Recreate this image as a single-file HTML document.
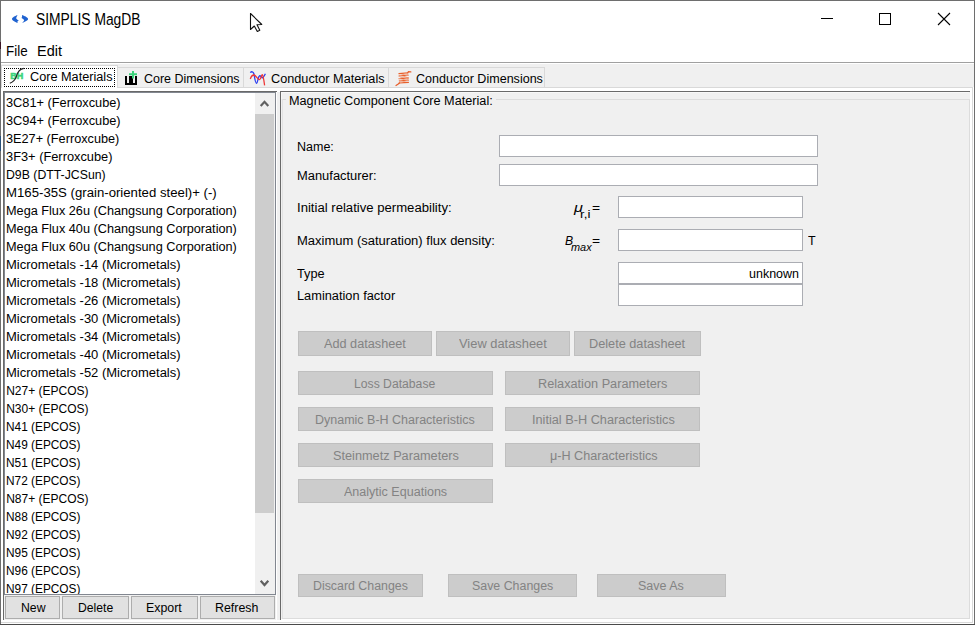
<!DOCTYPE html>
<html><head><meta charset="utf-8"><style>
html,body{margin:0;padding:0;width:975px;height:625px;overflow:hidden;background:#f0f0f0;}
body>div,body>svg,div>div{position:absolute;}
.t{font-family:"Liberation Sans",sans-serif;}
</style></head><body>
<div style="left:0px;top:0px;width:975px;height:62px;background:#fff;"></div>
<div style="left:0px;top:62px;width:975px;height:1px;background:#a0a0a0;"></div>
<div style="left:1px;top:63px;width:973px;height:1px;background:#fff;"></div>
<div style="left:1px;top:64px;width:973px;height:23px;background:#f0f0f0;"></div>
<div style="left:1px;top:87px;width:973px;height:537px;background:#fff;"></div>
<div style="left:117px;top:87px;width:856px;height:1px;background:#d9d9d9;"></div>
<div style="left:972px;top:87px;width:1px;height:536px;background:#d9d9d9;"></div>
<div style="left:1px;top:622px;width:972px;height:1px;background:#d9d9d9;"></div>
<div style="left:1px;top:65px;width:117px;height:23px;background:#fff;"></div>
<div style="left:1px;top:65px;width:117px;height:1px;background:#d9d9d9;"></div>
<div style="left:1px;top:65px;width:1px;height:23px;background:#d9d9d9;"></div>
<div style="left:117px;top:65px;width:1px;height:23px;background:#d9d9d9;"></div>
<div style="left:118px;top:68px;width:125px;height:19px;background:#f0f0f0;"></div>
<div style="left:117px;top:67px;width:127px;height:1px;background:#d9d9d9;"></div>
<div style="left:117px;top:67px;width:1px;height:21px;background:#d9d9d9;"></div>
<div style="left:243px;top:67px;width:1px;height:21px;background:#d9d9d9;"></div>
<div style="left:244px;top:68px;width:144px;height:19px;background:#f0f0f0;"></div>
<div style="left:243px;top:67px;width:146px;height:1px;background:#d9d9d9;"></div>
<div style="left:243px;top:67px;width:1px;height:21px;background:#d9d9d9;"></div>
<div style="left:388px;top:67px;width:1px;height:21px;background:#d9d9d9;"></div>
<div style="left:389px;top:68px;width:155px;height:19px;background:#f0f0f0;"></div>
<div style="left:388px;top:67px;width:157px;height:1px;background:#d9d9d9;"></div>
<div style="left:388px;top:67px;width:1px;height:21px;background:#d9d9d9;"></div>
<div style="left:544px;top:67px;width:1px;height:21px;background:#d9d9d9;"></div>
<div style="left:117px;top:65px;width:1px;height:23px;background:#d9d9d9;"></div>
<div style="left:4px;top:68px;width:111px;height:19px;background:repeating-linear-gradient(90deg,#000 0 1px,transparent 1px 2px) 0 0/100% 1px no-repeat,repeating-linear-gradient(90deg,#000 0 1px,transparent 1px 2px) 0 18px/100% 1px no-repeat,repeating-linear-gradient(180deg,#000 0 1px,transparent 1px 2px) 0 0/1px 100% no-repeat,repeating-linear-gradient(180deg,#000 0 1px,transparent 1px 2px) 110px 0/1px 100% no-repeat;"></div>
<div style="left:4px;top:92px;width:272px;height:528px;background:#f0f0f0;"></div>
<div style="left:3px;top:91px;width:274px;height:1px;background:#696969;"></div>
<div style="left:3px;top:91px;width:1px;height:529px;background:#696969;"></div>
<div style="left:4px;top:92px;width:272px;height:503px;background:#fff;box-shadow:inset 0 0 0 1px #828790;"></div>
<div style="left:255px;top:93px;width:20px;height:501px;background:#f0f0f0;"></div>
<div style="left:255px;top:114px;width:19px;height:399px;background:#cdcdcd;"></div>
<div style="left:5px;top:596px;width:55px;height:23px;background:#e1e1e1;box-shadow:inset 0 0 0 1px #adadad;"></div>
<div style="left:62px;top:596px;width:67px;height:23px;background:#e1e1e1;box-shadow:inset 0 0 0 1px #adadad;"></div>
<div style="left:131px;top:596px;width:67px;height:23px;background:#e1e1e1;box-shadow:inset 0 0 0 1px #adadad;"></div>
<div style="left:200px;top:596px;width:75px;height:23px;background:#e1e1e1;box-shadow:inset 0 0 0 1px #adadad;"></div>
<div style="left:277px;top:92px;width:3px;height:528px;background:#f0f0f0;"></div>
<div style="left:281px;top:92px;width:689px;height:527px;background:#f0f0f0;"></div>
<div style="left:280px;top:91px;width:690px;height:1px;background:#696969;"></div>
<div style="left:280px;top:91px;width:1px;height:529px;background:#696969;"></div>
<div style="left:281px;top:92px;width:688px;height:1px;background:#f8f8f8;"></div>
<div style="left:281px;top:92px;width:1px;height:7px;background:#f8f8f8;"></div>
<div style="left:282px;top:99px;width:688px;height:1px;background:#dcdcdc;"></div>
<div style="left:282px;top:99px;width:1px;height:520px;background:#e2e2e2;"></div>
<div style="left:969px;top:99px;width:1px;height:520px;background:#dcdcdc;"></div>
<div style="left:282px;top:618px;width:688px;height:1px;background:#dcdcdc;"></div>
<div style="left:286px;top:93px;width:210px;height:12px;background:#f0f0f0;"></div>
<div style="left:499px;top:135px;width:319px;height:22px;background:#fff;box-shadow:inset 0 0 0 1px #abadb3;"></div>
<div style="left:499px;top:164px;width:319px;height:22px;background:#fff;box-shadow:inset 0 0 0 1px #abadb3;"></div>
<div style="left:618px;top:196px;width:185px;height:22px;background:#fff;box-shadow:inset 0 0 0 1px #abadb3;"></div>
<div style="left:618px;top:229px;width:185px;height:22px;background:#fff;box-shadow:inset 0 0 0 1px #abadb3;"></div>
<div style="left:618px;top:262px;width:185px;height:22px;background:#fff;box-shadow:inset 0 0 0 1px #abadb3;"></div>
<div style="left:618px;top:284px;width:185px;height:22px;background:#fff;box-shadow:inset 0 0 0 1px #abadb3;"></div>
<div style="left:298px;top:331px;width:134px;height:25px;background:#cccccc;box-shadow:inset 0 0 0 1px #bfbfbf;"></div>
<div style="left:436px;top:331px;width:134px;height:25px;background:#cccccc;box-shadow:inset 0 0 0 1px #bfbfbf;"></div>
<div style="left:574px;top:331px;width:127px;height:25px;background:#cccccc;box-shadow:inset 0 0 0 1px #bfbfbf;"></div>
<div style="left:298px;top:371px;width:195px;height:24px;background:#cccccc;box-shadow:inset 0 0 0 1px #bfbfbf;"></div>
<div style="left:505px;top:371px;width:195px;height:24px;background:#cccccc;box-shadow:inset 0 0 0 1px #bfbfbf;"></div>
<div style="left:298px;top:407px;width:195px;height:24px;background:#cccccc;box-shadow:inset 0 0 0 1px #bfbfbf;"></div>
<div style="left:505px;top:407px;width:195px;height:24px;background:#cccccc;box-shadow:inset 0 0 0 1px #bfbfbf;"></div>
<div style="left:298px;top:443px;width:195px;height:24px;background:#cccccc;box-shadow:inset 0 0 0 1px #bfbfbf;"></div>
<div style="left:505px;top:443px;width:195px;height:24px;background:#cccccc;box-shadow:inset 0 0 0 1px #bfbfbf;"></div>
<div style="left:298px;top:479px;width:195px;height:24px;background:#cccccc;box-shadow:inset 0 0 0 1px #bfbfbf;"></div>
<div style="left:298px;top:574px;width:125px;height:23px;background:#cccccc;box-shadow:inset 0 0 0 1px #bfbfbf;"></div>
<div style="left:448px;top:574px;width:129px;height:23px;background:#cccccc;box-shadow:inset 0 0 0 1px #bfbfbf;"></div>
<div style="left:597px;top:574px;width:129px;height:23px;background:#cccccc;box-shadow:inset 0 0 0 1px #bfbfbf;"></div>
<div class="t" style="left:35.60px;top:11px;font-size:15.65px;line-height:17px;color:#000;white-space:pre;transform:scaleX(0.8842);transform-origin:0 0;">SIMPLIS MagDB</div>
<div class="t" style="left:5.70px;top:42px;font-size:15px;line-height:17px;color:#000;white-space:pre;transform:scaleX(0.8926);transform-origin:0 0;">File</div>
<div class="t" style="left:37.00px;top:42px;font-size:15px;line-height:17px;color:#000;white-space:pre;transform:scaleX(0.9651);transform-origin:0 0;">Edit</div>
<div class="t" style="left:29.70px;top:70px;font-size:12px;line-height:14px;color:#000;white-space:pre;transform:scaleX(1.0577);transform-origin:0 0;">Core Materials</div>
<div class="t" style="left:143.70px;top:72px;font-size:12px;line-height:14px;color:#000;white-space:pre;transform:scaleX(1.0380);transform-origin:0 0;">Core Dimensions</div>
<div class="t" style="left:270.80px;top:72px;font-size:12px;line-height:14px;color:#000;white-space:pre;transform:scaleX(1.0577);transform-origin:0 0;">Conductor Materials</div>
<div class="t" style="left:415.50px;top:72px;font-size:12px;line-height:14px;color:#000;white-space:pre;transform:scaleX(1.0453);transform-origin:0 0;">Conductor Dimensions</div>
<div style="left:5px;top:93px;width:250px;height:501px;overflow:hidden;">
<div class="t" style="left:1.20px;top:3px;font-size:12px;line-height:14px;color:#000;white-space:pre;transform:scaleX(1.0641);transform-origin:0 0;">3C81+ (Ferroxcube)</div><div class="t" style="left:1.20px;top:21px;font-size:12px;line-height:14px;color:#000;white-space:pre;transform:scaleX(1.0641);transform-origin:0 0;">3C94+ (Ferroxcube)</div><div class="t" style="left:1.20px;top:39px;font-size:12px;line-height:14px;color:#000;white-space:pre;transform:scaleX(1.0588);transform-origin:0 0;">3E27+ (Ferroxcube)</div><div class="t" style="left:1.20px;top:57px;font-size:12px;line-height:14px;color:#000;white-space:pre;transform:scaleX(1.0682);transform-origin:0 0;">3F3+ (Ferroxcube)</div><div class="t" style="left:1.20px;top:75px;font-size:12px;line-height:14px;color:#000;white-space:pre;transform:scaleX(1.0236);transform-origin:0 0;">D9B (DTT-JCSun)</div><div class="t" style="left:1.20px;top:93px;font-size:12px;line-height:14px;color:#000;white-space:pre;transform:scaleX(1.0991);transform-origin:0 0;">M165-35S (grain-oriented steel)+ (-)</div><div class="t" style="left:1.20px;top:111px;font-size:12px;line-height:14px;color:#000;white-space:pre;transform:scaleX(1.0582);transform-origin:0 0;">Mega Flux 26u (Changsung Corporation)</div><div class="t" style="left:1.20px;top:129px;font-size:12px;line-height:14px;color:#000;white-space:pre;transform:scaleX(1.0582);transform-origin:0 0;">Mega Flux 40u (Changsung Corporation)</div><div class="t" style="left:1.20px;top:147px;font-size:12px;line-height:14px;color:#000;white-space:pre;transform:scaleX(1.0582);transform-origin:0 0;">Mega Flux 60u (Changsung Corporation)</div><div class="t" style="left:1.20px;top:165px;font-size:12px;line-height:14px;color:#000;white-space:pre;transform:scaleX(1.0818);transform-origin:0 0;">Micrometals -14 (Micrometals)</div><div class="t" style="left:1.20px;top:183px;font-size:12px;line-height:14px;color:#000;white-space:pre;transform:scaleX(1.0818);transform-origin:0 0;">Micrometals -18 (Micrometals)</div><div class="t" style="left:1.20px;top:201px;font-size:12px;line-height:14px;color:#000;white-space:pre;transform:scaleX(1.0818);transform-origin:0 0;">Micrometals -26 (Micrometals)</div><div class="t" style="left:1.20px;top:219px;font-size:12px;line-height:14px;color:#000;white-space:pre;transform:scaleX(1.0818);transform-origin:0 0;">Micrometals -30 (Micrometals)</div><div class="t" style="left:1.20px;top:237px;font-size:12px;line-height:14px;color:#000;white-space:pre;transform:scaleX(1.0818);transform-origin:0 0;">Micrometals -34 (Micrometals)</div><div class="t" style="left:1.20px;top:255px;font-size:12px;line-height:14px;color:#000;white-space:pre;transform:scaleX(1.0818);transform-origin:0 0;">Micrometals -40 (Micrometals)</div><div class="t" style="left:1.20px;top:273px;font-size:12px;line-height:14px;color:#000;white-space:pre;transform:scaleX(1.0818);transform-origin:0 0;">Micrometals -52 (Micrometals)</div><div class="t" style="left:1.20px;top:291px;font-size:12px;line-height:14px;color:#000;white-space:pre;">N27+ (EPCOS)</div><div class="t" style="left:1.20px;top:309px;font-size:12px;line-height:14px;color:#000;white-space:pre;">N30+ (EPCOS)</div><div class="t" style="left:1.20px;top:327px;font-size:12px;line-height:14px;color:#000;white-space:pre;transform:scaleX(0.9881);transform-origin:0 0;">N41 (EPCOS)</div><div class="t" style="left:1.20px;top:345px;font-size:12px;line-height:14px;color:#000;white-space:pre;transform:scaleX(0.9881);transform-origin:0 0;">N49 (EPCOS)</div><div class="t" style="left:1.20px;top:363px;font-size:12px;line-height:14px;color:#000;white-space:pre;transform:scaleX(0.9881);transform-origin:0 0;">N51 (EPCOS)</div><div class="t" style="left:1.20px;top:381px;font-size:12px;line-height:14px;color:#000;white-space:pre;transform:scaleX(0.9881);transform-origin:0 0;">N72 (EPCOS)</div><div class="t" style="left:1.20px;top:399px;font-size:12px;line-height:14px;color:#000;white-space:pre;">N87+ (EPCOS)</div><div class="t" style="left:1.20px;top:417px;font-size:12px;line-height:14px;color:#000;white-space:pre;transform:scaleX(0.9881);transform-origin:0 0;">N88 (EPCOS)</div><div class="t" style="left:1.20px;top:435px;font-size:12px;line-height:14px;color:#000;white-space:pre;transform:scaleX(0.9881);transform-origin:0 0;">N92 (EPCOS)</div><div class="t" style="left:1.20px;top:453px;font-size:12px;line-height:14px;color:#000;white-space:pre;transform:scaleX(0.9881);transform-origin:0 0;">N95 (EPCOS)</div><div class="t" style="left:1.20px;top:471px;font-size:12px;line-height:14px;color:#000;white-space:pre;transform:scaleX(0.9881);transform-origin:0 0;">N96 (EPCOS)</div><div class="t" style="left:1.20px;top:489px;font-size:12px;line-height:14px;color:#000;white-space:pre;transform:scaleX(0.9881);transform-origin:0 0;">N97 (EPCOS)</div></div>
<div class="t" style="left:20.50px;top:601px;font-size:12px;line-height:14px;color:#000;white-space:pre;transform:scaleX(1.0208);transform-origin:0 0;">New</div>
<div class="t" style="left:77.50px;top:601px;font-size:12px;line-height:14px;color:#000;white-space:pre;transform:scaleX(1.0144);transform-origin:0 0;">Delete</div>
<div class="t" style="left:146.30px;top:601px;font-size:12px;line-height:14px;color:#000;white-space:pre;transform:scaleX(1.0317);transform-origin:0 0;">Export</div>
<div class="t" style="left:215.30px;top:601px;font-size:12px;line-height:14px;color:#000;white-space:pre;transform:scaleX(1.0333);transform-origin:0 0;">Refresh</div>
<div class="t" style="left:288.80px;top:94px;font-size:12px;line-height:14px;color:#000;white-space:pre;transform:scaleX(1.0571);transform-origin:0 0;">Magnetic Component Core Material:</div>
<div class="t" style="left:297.40px;top:140px;font-size:12px;line-height:14px;color:#000;white-space:pre;transform:scaleX(1.0425);transform-origin:0 0;">Name:</div>
<div class="t" style="left:297.40px;top:169px;font-size:12px;line-height:14px;color:#000;white-space:pre;transform:scaleX(1.0757);transform-origin:0 0;">Manufacturer:</div>
<div class="t" style="left:297.40px;top:201px;font-size:12px;line-height:14px;color:#000;white-space:pre;transform:scaleX(1.0934);transform-origin:0 0;">Initial relative permeability:</div>
<div class="t" style="left:297.40px;top:234px;font-size:12px;line-height:14px;color:#000;white-space:pre;transform:scaleX(1.0832);transform-origin:0 0;">Maximum (saturation) flux density:</div>
<div class="t" style="left:297.40px;top:267px;font-size:12px;line-height:14px;color:#000;white-space:pre;transform:scaleX(1.0615);transform-origin:0 0;">Type</div>
<div class="t" style="left:297.40px;top:289px;font-size:12px;line-height:14px;color:#000;white-space:pre;transform:scaleX(1.0662);transform-origin:0 0;">Lamination factor</div>
<div class="t" style="left:808.00px;top:234px;font-size:12px;line-height:14px;color:#000;white-space:pre;transform:scaleX(1.0411);transform-origin:0 0;">T</div>
<div class="t" style="left:748.70px;top:267px;font-size:12px;line-height:14px;color:#000;white-space:pre;transform:scaleX(1.0417);transform-origin:0 0;">unknown</div>
<div class="t" style="left:574.20px;top:201px;font-size:12px;line-height:14px;color:#000;white-space:pre;font-style:italic;transform:scaleX(1.3478);transform-origin:0 0;">μ</div>
<div class="t" style="left:580.00px;top:208px;font-size:11px;line-height:12px;color:#000;white-space:pre;transform:scaleX(1.2209);transform-origin:0 0;">r,i</div>
<div class="t" style="left:591.80px;top:201px;font-size:12px;line-height:14px;color:#000;white-space:pre;transform:scaleX(1.1571);transform-origin:0 0;">=</div>
<div class="t" style="left:565.10px;top:234px;font-size:12px;line-height:14px;color:#000;white-space:pre;font-style:italic;transform:scaleX(1.0125);transform-origin:0 0;">B</div>
<div class="t" style="left:570.80px;top:241px;font-size:11px;line-height:12px;color:#000;white-space:pre;font-style:italic;transform:scaleX(0.9906);transform-origin:0 0;">max</div>
<div class="t" style="left:591.80px;top:234px;font-size:12px;line-height:14px;color:#000;white-space:pre;transform:scaleX(1.1571);transform-origin:0 0;">=</div>
<div class="t" style="left:324.30px;top:337px;font-size:12px;line-height:14px;color:#838383;white-space:pre;transform:scaleX(1.0581);transform-origin:0 0;">Add datasheet</div>
<div class="t" style="left:459.20px;top:337px;font-size:12px;line-height:14px;color:#838383;white-space:pre;transform:scaleX(1.0733);transform-origin:0 0;">View datasheet</div>
<div class="t" style="left:589.20px;top:337px;font-size:12px;line-height:14px;color:#838383;white-space:pre;transform:scaleX(1.0595);transform-origin:0 0;">Delete datasheet</div>
<div class="t" style="left:354.30px;top:377px;font-size:12px;line-height:14px;color:#838383;white-space:pre;transform:scaleX(1.0150);transform-origin:0 0;">Loss Database</div>
<div class="t" style="left:538.00px;top:377px;font-size:12px;line-height:14px;color:#838383;white-space:pre;transform:scaleX(1.0598);transform-origin:0 0;">Relaxation Parameters</div>
<div class="t" style="left:315.30px;top:413px;font-size:12px;line-height:14px;color:#838383;white-space:pre;transform:scaleX(1.0411);transform-origin:0 0;">Dynamic B-H Characteristics</div>
<div class="t" style="left:531.60px;top:413px;font-size:12px;line-height:14px;color:#838383;white-space:pre;transform:scaleX(1.0601);transform-origin:0 0;">Initial B-H Characteristics</div>
<div class="t" style="left:332.90px;top:449px;font-size:12px;line-height:14px;color:#838383;white-space:pre;transform:scaleX(1.0607);transform-origin:0 0;">Steinmetz Parameters</div>
<div class="t" style="left:550.30px;top:449px;font-size:12px;line-height:14px;color:#838383;white-space:pre;transform:scaleX(1.0518);transform-origin:0 0;">μ-H Characteristics</div>
<div class="t" style="left:344.20px;top:485px;font-size:12px;line-height:14px;color:#838383;white-space:pre;transform:scaleX(1.0446);transform-origin:0 0;">Analytic Equations</div>
<div class="t" style="left:313.20px;top:579px;font-size:12px;line-height:14px;color:#838383;white-space:pre;transform:scaleX(1.0304);transform-origin:0 0;">Discard Changes</div>
<div class="t" style="left:472.30px;top:579px;font-size:12px;line-height:14px;color:#838383;white-space:pre;transform:scaleX(1.0318);transform-origin:0 0;">Save Changes</div>
<div class="t" style="left:638.30px;top:579px;font-size:12px;line-height:14px;color:#838383;white-space:pre;transform:scaleX(1.0409);transform-origin:0 0;">Save As</div>
<svg style="left:0;top:0;width:975px;height:625px;" width="975" height="625" viewBox="0 0 975 625"><path d="M17.6 15 C15.5 15.8 12.2 17.2 12 19 C12.2 20.8 15.5 22.2 17.8 23 C17.2 22.2 16.8 21.6 18.8 20.6 C17.3 19.8 16.3 18.9 16.2 18.3 C16.3 17.4 17 16 17.6 15Z" fill="#1f62d0"/><path d="M22 15 C24.2 15.8 27.8 17.2 28.1 19 C27.8 20.8 24.2 22.2 22 23 C22.8 22.2 23.8 21.4 24.2 20 C23.6 19.4 22.6 18.5 21.6 17.9 C22 17 22.3 16 22 15Z" fill="#1f62d0"/><path d="M250.5 13.5 L250.5 29.5 L254.3 26 L257.3 31.5 L259.8 30.3 L257 24.8 L261.8 24.5 Z" fill="#fff" stroke="#111" stroke-width="1.1" stroke-linejoin="round"/><path d="M821 18.5 H833" stroke="#000" stroke-width="1"/><rect x="879.5" y="13.5" width="11" height="11" fill="none" stroke="#000" stroke-width="1"/><path d="M938 13 L950 25 M950 13 L938 25" stroke="#000" stroke-width="1.1"/><text x="10.2" y="79" font-family="Liberation Sans" font-weight="bold" font-size="8.6" fill="#3cd47c" stroke="#3cd47c" stroke-width="0.55" textLength="13" lengthAdjust="spacingAndGlyphs">BH</text><path d="M9.8 83.2 C14 81.5 15.5 79 16.3 76.6 C17.3 73 19 69 23.8 68.4" fill="none" stroke="#222" stroke-width="1.2"/><path d="M125 76 H127 V83 H129 V76 H133 V83 H135 V76 H137 V85 H125 Z" fill="#000"/><path d="M129 73.2 H137 V75.2 H129Z M132 71 H134 V78.5 H132Z" fill="#3ad27a"/><path d="M250.3 72.6 C251.5 71.2 253.2 71.5 253.8 73.5 C254.5 76 255.3 83.5 256.5 83.3 C257.8 83 258 76.5 259.5 75.8 C260.8 75.2 261.8 78.6 263 77.5 C264 76.6 264.8 75 265.4 73.8" fill="none" stroke="#2d3ff0" stroke-width="1.3"/><path d="M250.3 79 C251 76.8 252.5 75 254 75 C256 75.2 258 79.8 259.5 79.6 C261 79.4 261.5 74.5 262.3 74.6 C263.2 74.8 264 81 264.6 85.4" fill="none" stroke="#ee3535" stroke-width="1.3"/><g fill="none" stroke-linecap="round"><path d="M399 73.6 L407.8 72.9 M399.2 75.9 L408 75.2 M399.2 78.6 L408.2 78 M399.4 80.8 L408.2 80.2 M399.4 82.9 L408.4 82.4" stroke="#e8602c" stroke-width="1.3"/><path d="M407.8 72.9 L399.2 75.9 M408 75.2 L399.2 78.6 M408.2 78 L399.4 80.8 M408.2 80.2 L399.4 82.9" stroke="#f0a080" stroke-width="0.9"/><path d="M407.8 72.6 L408.5 71.6 L410.8 71.9 M399.4 82.9 L398.2 84 L396 85.5" stroke="#e8602c" stroke-width="1.3"/></g><path d="M260.7 106 L264.5 101.8 L268.3 106" fill="none" stroke="#606060" stroke-width="2.2"/><path d="M260.7 580.8 L264.5 585 L268.3 580.8" fill="none" stroke="#606060" stroke-width="2.2"/></svg>
<div style="left:0px;top:0px;width:1px;height:625px;background:#6e6e6e;"></div>
<div style="left:974px;top:0px;width:1px;height:625px;background:#6e6e6e;"></div>
<div style="left:0px;top:0px;width:975px;height:1px;background:#6e6e6e;"></div>
<div style="left:0px;top:624px;width:975px;height:1px;background:#4a4a4a;"></div>
<div style="left:0px;top:42px;width:1px;height:7px;background:#3a1424;"></div>
<div style="left:0px;top:136px;width:1px;height:15px;background:#28507a;"></div>
</body></html>
